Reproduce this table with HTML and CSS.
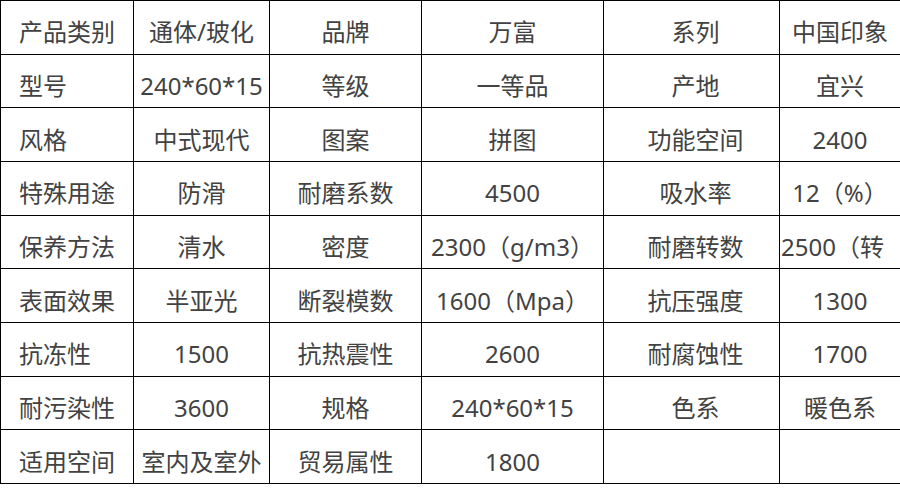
FILE: index.html
```html
<!DOCTYPE html>
<html lang="zh-CN">
<head>
<meta charset="utf-8">
<title>产品参数</title>
<link rel="stylesheet" href="styles.css">
</head>
<body>
<table class="spec">
  <colgroup>
    <col class="c1"><col class="c2"><col class="c3"><col class="c4"><col class="c5"><col class="c6">
  </colgroup>
  <tbody>
    <tr><td class="lbl">产品类别</td><td>通体/玻化</td><td>品牌</td><td>万富</td><td class="k2">系列</td><td>中国印象</td></tr>
    <tr><td class="lbl">型号</td><td>240*60*15</td><td>等级</td><td>一等品</td><td class="k2">产地</td><td>宜兴</td></tr>
    <tr><td class="lbl">风格</td><td>中式现代</td><td>图案</td><td>拼图</td><td class="k2">功能空间</td><td>2400</td></tr>
    <tr><td class="lbl">特殊用途</td><td>防滑</td><td>耐磨系数</td><td>4500</td><td class="k2">吸水率</td><td>12（%）</td></tr>
    <tr><td class="lbl">保养方法</td><td>清水</td><td>密度</td><td>2300（g/m3）</td><td class="k2">耐磨转数</td><td class="clip">2500（转</td></tr>
    <tr><td class="lbl">表面效果</td><td>半亚光</td><td>断裂模数</td><td>1600（Mpa）</td><td class="k2">抗压强度</td><td>1300</td></tr>
    <tr><td class="lbl">抗冻性</td><td>1500</td><td>抗热震性</td><td>2600</td><td class="k2">耐腐蚀性</td><td>1700</td></tr>
    <tr><td class="lbl">耐污染性</td><td>3600</td><td>规格</td><td>240*60*15</td><td class="k2">色系</td><td>暖色系</td></tr>
    <tr><td class="lbl">适用空间</td><td>室内及室外</td><td>贸易属性</td><td>1800</td><td class="k2"></td><td></td></tr>
  </tbody>
</table>
</body>
</html>
```

FILE: styles.css
```css
html, body {
  margin: 0;
  padding: 0;
  background: #ffffff;
}

.spec {
  border-collapse: collapse;
  table-layout: fixed;
  width: 900px;
  height: 484px;
  font-family: "Noto Sans", "Noto Sans CJK SC", sans-serif;
  font-size: 24px;
  color: #424242;
}

.c1 { width: 133px; }
.c2 { width: 136px; }
.c3 { width: 152px; }
.c4 { width: 182px; }
.c5 { width: 176px; }
.c6 { width: 121px; }

.spec td {
  border: 1px solid #000000;
  text-align: center;
  vertical-align: middle;
  line-height: 24px;
  padding: 10px 0 0 0;
  white-space: nowrap;
  overflow: hidden;
}

.spec td.lbl {
  text-align: left;
  padding-left: 18px;
}

.spec td.k2 {
  padding-left: 8px;
}

.spec td.clip {
  text-align: left;
  padding-left: 1px;
}
```
